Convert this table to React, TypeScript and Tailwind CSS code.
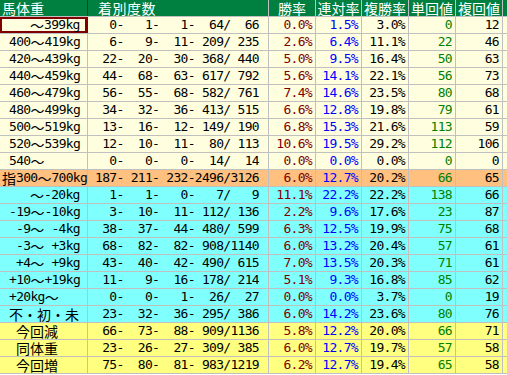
const YELLOW = "bg-[#ffffe0]";

type Row = {
  label: string;
  pad: string;
  counts: string;
  win: string;
  ren: string;
  fuku: string;
  tan: string;
  fk: string;
  bg: string;
};

// label, left padding, 着別度数, 勝率, 連対率, 複勝率, 単回値, 複回値
const raw: [string, string, string, string, string, string, string, string][] = [
  ["～399kg", "pl-[30px]", "  0-   1-   1-  64/  66", "0.0%", "1.5%", "3.0%", "0", "12"],
  ["400～419kg", "pl-[9px]", "  6-   9-  11- 209/ 235", "2.6%", "6.4%", "11.1%", "22", "46"],
  ["420～439kg", "pl-[9px]", " 22-  20-  30- 368/ 440", "5.0%", "9.5%", "16.4%", "50", "63"],
  ["440～459kg", "pl-[9px]", " 44-  68-  63- 617/ 792", "5.6%", "14.1%", "22.1%", "56", "73"],
  ["460～479kg", "pl-[9px]", " 56-  55-  68- 582/ 761", "7.4%", "14.6%", "23.5%", "80", "68"],
  ["480～499kg", "pl-[9px]", " 34-  32-  36- 413/ 515", "6.6%", "12.8%", "19.8%", "79", "61"],
  ["500～519kg", "pl-[9px]", " 13-  16-  12- 149/ 190", "6.8%", "15.3%", "21.6%", "113", "59"],
  ["520～539kg", "pl-[9px]", " 12-  10-  11-  80/ 113", "10.6%", "19.5%", "29.2%", "112", "106"],
  ["540～", "pl-[9px]", "  0-   0-   0-  14/  14", "0.0%", "0.0%", "0.0%", "0", "0"],
  ["指300～700kg", "pl-[2px]", "187- 211- 232-2496/3126", "6.0%", "12.7%", "20.2%", "66", "65"],
  ["～-20kg", "pl-[30px]", "  1-   1-   0-   7/   9", "11.1%", "22.2%", "22.2%", "138", "66"],
  ["-19～-10kg", "pl-[9px]", "  3-  10-  11- 112/ 136", "2.2%", "9.6%", "17.6%", "23", "87"],
  ["-9～ -4kg", "pl-[16px]", " 38-  37-  44- 480/ 599", "6.3%", "12.5%", "19.9%", "75", "68"],
  ["-3～ +3kg", "pl-[16px]", " 68-  82-  82- 908/1140", "6.0%", "13.2%", "20.4%", "57", "61"],
  ["+4～ +9kg", "pl-[16px]", " 43-  40-  42- 490/ 615", "7.0%", "13.5%", "20.3%", "71", "61"],
  ["+10～+19kg", "pl-[9px]", " 11-   9-  16- 178/ 214", "5.1%", "9.3%", "16.8%", "85", "62"],
  ["+20kg～", "pl-[9px]", "  0-   0-   1-  26/  27", "0.0%", "0.0%", "3.7%", "0", "19"],
  ["不・初・未", "pl-[9px]", " 23-  32-  36- 295/ 386", "6.0%", "14.2%", "23.6%", "80", "76"],
  ["今回減", "pl-[16px]", " 66-  73-  88- 909/1136", "5.8%", "12.2%", "20.0%", "66", "71"],
  ["同体重", "pl-[16px]", " 23-  26-  27- 309/ 385", "6.0%", "12.7%", "19.7%", "57", "58"],
  ["今回増", "pl-[16px]", " 75-  80-  81- 983/1219", "6.2%", "12.7%", "19.4%", "65", "58"],
];

const rows: Row[] = raw.map((r, i) => ({
  label: r[0],
  pad: r[1],
  counts: r[2],
  win: r[3],
  ren: r[4],
  fuku: r[5],
  tan: r[6],
  fk: r[7],
  bg: i < 9 ? YELLOW : i === 9 ? "bg-[#ffc080]" : i < 18 ? "bg-[#80ffff]" : "bg-[#ffff80]",
}));

// half-width runs in mono, full-width runs in the CJK face
const Mixed = ({ text }: { text: string }) => {
  const parts = text.match(/[\x00-\x7f]+|[^\x00-\x7f]+/g) || [];
  return (
    <>
      {parts.map((p, i) =>
        /^[\x00-\x7f]/.test(p) ? (
          <span key={i} className="inline-block h-[16px] align-top">{p}</span>
        ) : (
          <span
            key={i}
            className="inline-block h-[16px] align-top font-['Noto_Sans_CJK_JP',sans-serif] text-[14px] leading-[16px] tracking-[0px]"
          >
            {p}
          </span>
        )
      )}
    </>
  );
};

const cols = "grid grid-cols-[88px_181px_47px_46px_47px_47px_47px_1fr]";
const cell = "border-r border-[#c0c0c0] h-[16px] leading-[16px] whitespace-pre";
const num = cell + " text-right pr-[3px]";

const headers = ["勝率", "連対率", "複勝率", "単回値", "複回値"];

export default function App() {
  return (
    <div className="w-[507px] h-[375px] overflow-hidden bg-white font-['DejaVu_Sans_Mono',monospace] text-[13px] tracking-[-0.7px] leading-[16px] text-black">
      <div className={cols + " bg-[#008040] text-white border-b border-[#c0c0c0] font-['Noto_Sans_CJK_JP',sans-serif] text-[14px] tracking-[0px]"}>
        <div className="h-[16px] border-r border-[#303030] pl-[2px] leading-[16px]">馬体重</div>
        <div className="h-[16px] border-r border-[#c0c0c0] pl-[10px] leading-[16px] tracking-[0.5px]">着別度数</div>
        {headers.map((h) => (
          <div key={h} className="h-[16px] border-r border-[#c0c0c0] text-center leading-[16px] whitespace-nowrap">
            {h}
          </div>
        ))}
        <div className="h-[16px]" />
      </div>
      {rows.map((r, i) => (
        <div key={i} className={cols + " border-b border-[#c0c0c0] " + r.bg}>
          <div className={cell + " " + r.pad + (i === 0 ? " shadow-[inset_0_0_0_2px_#800000] border-r-[#800000]" : "")}>
            <Mixed text={r.label} />
          </div>
          <div className={cell + " pl-[7px]"}>{r.counts}</div>
          <div className={num + " text-[#800000]"}>{r.win}</div>
          <div className={num + " text-[#0000ff]"}>{r.ren}</div>
          <div className={num}>{r.fuku}</div>
          <div className={num + " text-[#008000]"}>{r.tan}</div>
          <div className={num}>{r.fk}</div>
          <div className="h-[16px]" />
        </div>
      ))}
    </div>
  );
}
